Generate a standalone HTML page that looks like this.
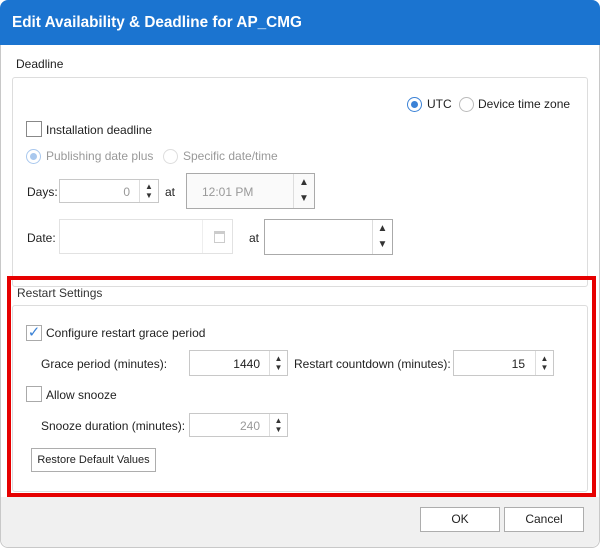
<!DOCTYPE html>
<html><head><style>
*{box-sizing:border-box;margin:0;padding:0}
body{width:600px;height:548px;background:#fff;font-family:"Liberation Sans",sans-serif;font-size:12px;color:#222;position:relative;overflow:hidden}
.a{position:absolute}
.t{position:absolute;line-height:14px;white-space:nowrap}
.box{position:absolute;border:1px solid #c8c8c8;background:#fff}
.dis{color:#999}
.cb{position:absolute;width:16px;height:16px;border:1px solid #888;background:#fff}
.rad{position:absolute;width:15px;height:15px;border:1px solid #bbb;border-radius:50%;background:#fff}
.rad.on{border-color:#3b82d6}
.rad.on:after{content:"";position:absolute;left:3px;top:3px;width:7px;height:7px;border-radius:50%;background:#3b82d6}
.rad.don{border-color:#a9c8ee}
.rad.don:after{content:"";position:absolute;left:3px;top:3px;width:7px;height:7px;border-radius:50%;background:#a9c8ee}
.sp{position:absolute;top:0;bottom:0;right:0;border-left:1px solid #ddd;font-size:8px;line-height:9px;text-align:center;color:#333}
.btn{position:absolute;border:1px solid #adadad;background:#fff;text-align:center}
</style></head><body>
<div class="a" style="left:0;top:0;width:600px;height:45px;background:#1b74d0;border-radius:8px 8px 0 0"></div>
<div class="t" style="left:12px;top:13px;font-size:15.3px;line-height:20px;font-weight:bold;color:#fff">Edit Availability &amp; Deadline for AP_CMG</div>
<div class="a" style="left:0;top:45px;width:600px;height:503px;border:1px solid #c8c8c8;border-top:none;border-radius:0 0 8px 8px"></div>
<div class="a" style="left:1px;top:497px;width:598px;height:50px;background:#f0f0f0;border-radius:0 0 8px 8px"></div>

<div class="t" style="left:16px;top:57px">Deadline</div>
<div class="a" style="left:12px;top:77px;width:576px;height:210px;border:1px solid #ddd;border-radius:3px"></div>

<div class="rad on" style="left:407px;top:97px"></div><div class="t" style="left:427px;top:97px">UTC</div>
<div class="rad" style="left:459px;top:97px"></div><div class="t" style="left:478px;top:97px">Device time zone</div>

<div class="cb" style="left:26px;top:121px"></div><div class="t" style="left:46px;top:123px">Installation deadline</div>
<div class="rad don" style="left:26px;top:149px"></div><div class="t dis" style="left:46px;top:149px">Publishing date plus</div>
<div class="rad" style="left:163px;top:149px;border-color:#ddd"></div><div class="t dis" style="left:183px;top:149px">Specific date/time</div>

<div class="t" style="left:27px;top:185px">Days:</div>
<div class="box" style="left:59px;top:179px;width:100px;height:24px"><div class="t dis" style="right:28px;top:5px">0</div><div class="sp" style="width:19px;padding-top:2px">▲<br>▼</div></div>
<div class="t" style="left:165px;top:185px">at</div>
<div class="box" style="left:186px;top:173px;width:129px;height:36px;border-color:#aaa;background:#fafafa"><div class="t dis" style="left:15px;top:11px">12:01 PM</div><div class="sp" style="width:21px;font-size:10px;line-height:16px;padding-top:1px">▲<br>▼</div></div>

<div class="t" style="left:27px;top:231px">Date:</div>
<div class="box" style="left:59px;top:219px;width:174px;height:35px;border-color:#e2e2e2"><div class="a" style="left:142px;top:0;bottom:0;border-left:1px solid #eee"></div><div class="a" style="left:154px;top:11px;width:11px;height:12px;border:1px solid #ccc;border-top-width:3px"></div></div>
<div class="t" style="left:249px;top:231px">at</div>
<div class="box" style="left:264px;top:219px;width:129px;height:36px;border-color:#aaa"><div class="sp" style="width:20px;font-size:10px;line-height:16px;padding-top:1px">▲<br>▼</div></div>

<div class="a" style="left:7px;top:276px;width:589px;height:221px;border:4px solid #e60000"></div>
<div class="t" style="left:17px;top:286px;color:#333">Restart Settings</div>
<div class="a" style="left:12px;top:305px;width:576px;height:187px;border:1px solid #ddd;border-radius:3px"></div>

<div class="cb" style="left:26px;top:325px;border-color:#aaa;color:#3b82d6;font-size:15px;line-height:14px;text-align:center">✓</div><div class="t" style="left:46px;top:326px">Configure restart grace period</div>
<div class="t" style="left:41px;top:357px">Grace period (minutes):</div>
<div class="box" style="left:189px;top:350px;width:99px;height:26px"><div class="t" style="right:27px;top:6px">1440</div><div class="sp" style="width:18px;padding-top:3px">▲<br>▼</div></div>
<div class="t" style="left:294px;top:357px">Restart countdown (minutes):</div>
<div class="box" style="left:453px;top:350px;width:101px;height:26px"><div class="t" style="right:28px;top:6px">15</div><div class="sp" style="width:18px;padding-top:3px">▲<br>▼</div></div>

<div class="cb" style="left:26px;top:386px;border-color:#aaa"></div><div class="t" style="left:46px;top:388px">Allow snooze</div>
<div class="t" style="left:41px;top:419px">Snooze duration (minutes):</div>
<div class="box" style="left:189px;top:413px;width:99px;height:24px"><div class="t dis" style="right:27px;top:5px">240</div><div class="sp" style="width:18px;padding-top:2px">▲<br>▼</div></div>

<div class="btn" style="left:31px;top:448px;width:125px;height:24px;line-height:22px;font-size:11px">Restore Default Values</div>

<div class="btn" style="left:420px;top:507px;width:80px;height:25px;line-height:23px">OK</div>
<div class="btn" style="left:504px;top:507px;width:80px;height:25px;line-height:23px">Cancel</div>
</body></html>
